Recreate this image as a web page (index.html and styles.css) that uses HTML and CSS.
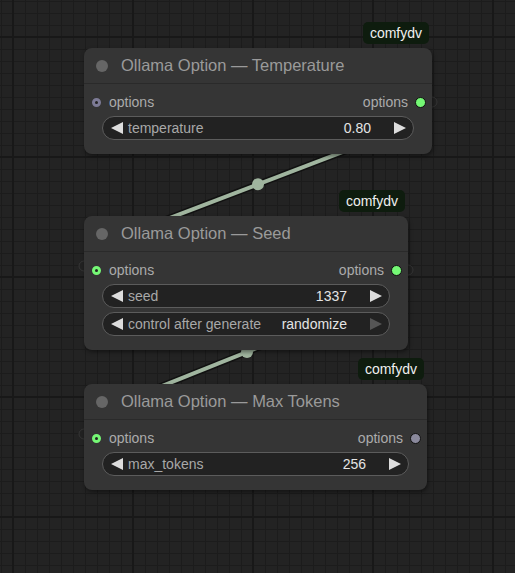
FILE: index.html
```html
<!DOCTYPE html>
<html lang="en">

<head>
    <meta charset="UTF-8">
    <meta name="viewport" content="width=device-width, initial-scale=1.0">
    <title>Ollama Options</title>

    <link rel="stylesheet" href="styles.css">
</head>

<body>
    <main class="canvas">
        <!-- links are drawn under the nodes -->
        <svg class="links" width="515" height="573" viewBox="0 0 515 573">
            <circle class="stub" cx="432" cy="102" r="5" />
            <circle class="stub" cx="84" cy="266" r="5" />
            <circle class="stub" cx="408" cy="270" r="5" />
            <circle class="stub" cx="84" cy="434" r="5" />

            <line class="wire-edge" x1="420" y1="122.4" x2="100" y2="244.7" />
            <line class="wire" x1="420" y1="122.4" x2="100" y2="244.7" />
            <circle class="wire-dot" cx="258" cy="184.3" r="6" />

            <line class="wire-edge" x1="395" y1="292.8" x2="100" y2="410.8" />
            <line class="wire" x1="395" y1="292.8" x2="100" y2="410.8" />
            <circle class="wire-dot" cx="247" cy="352" r="6" />
        </svg>

        <div class="node node-temp">
            <span class="badge">comfydv</span>
            <div class="title">
                <span class="title-dot"></span>
                <span>Ollama Option — Temperature</span>
            </div>
            <div class="body">
                <div class="slots">
                    <span class="slot-in muted"></span>
                    <span class="slot-label">options</span>
                    <span class="slot-label out">options</span>
                    <span class="slot-out"></span>
                </div>
                <div class="widget">
                    <svg class="arrow" width="12" height="12" viewBox="0 0 12 12"><polygon points="12,0 12,12 0,6" /></svg>
                    <span class="w-label">temperature</span>
                    <span class="w-value">0.80</span>
                    <svg class="arrow" width="12" height="12" viewBox="0 0 12 12"><polygon points="0,0 0,12 12,6" /></svg>
                </div>
            </div>
        </div>

        <div class="node node-seed">
            <span class="badge">comfydv</span>
            <div class="title">
                <span class="title-dot"></span>
                <span>Ollama Option — Seed</span>
            </div>
            <div class="body">
                <div class="slots">
                    <span class="slot-in"></span>
                    <span class="slot-label">options</span>
                    <span class="slot-label out">options</span>
                    <span class="slot-out"></span>
                </div>
                <div class="widget">
                    <svg class="arrow" width="12" height="12" viewBox="0 0 12 12"><polygon points="12,0 12,12 0,6" /></svg>
                    <span class="w-label">seed</span>
                    <span class="w-value">1337</span>
                    <svg class="arrow" width="12" height="12" viewBox="0 0 12 12"><polygon points="0,0 0,12 12,6" /></svg>
                </div>
                <div class="widget">
                    <svg class="arrow" width="12" height="12" viewBox="0 0 12 12"><polygon points="12,0 12,12 0,6" /></svg>
                    <span class="w-label">control after generate</span>
                    <span class="w-value">randomize</span>
                    <svg class="arrow off" width="12" height="12" viewBox="0 0 12 12"><polygon points="0,0 0,12 12,6" /></svg>
                </div>
            </div>
        </div>

        <div class="node node-tokens">
            <span class="badge">comfydv</span>
            <div class="title">
                <span class="title-dot"></span>
                <span>Ollama Option — Max Tokens</span>
            </div>
            <div class="body">
                <div class="slots">
                    <span class="slot-in"></span>
                    <span class="slot-label">options</span>
                    <span class="slot-label out">options</span>
                    <span class="slot-out muted"></span>
                </div>
                <div class="widget">
                    <svg class="arrow" width="12" height="12" viewBox="0 0 12 12"><polygon points="12,0 12,12 0,6" /></svg>
                    <span class="w-label">max_tokens</span>
                    <span class="w-value">256</span>
                    <svg class="arrow" width="12" height="12" viewBox="0 0 12 12"><polygon points="0,0 0,12 12,6" /></svg>
                </div>
            </div>
        </div>
    </main>
</body>

</html>
```

FILE: styles.css
```css
body {
    margin: 0;
    background: #232323;
    font-family: "Liberation Sans", Arial, sans-serif;
}

.canvas {
    position: relative;
    width: 515px;
    height: 573px;
    overflow: hidden;
    background-color: #232323;
    background-image:
        linear-gradient(to right, #181818 2px, transparent 2px),
        linear-gradient(to bottom, #181818 2px, transparent 2px),
        linear-gradient(to right, #1c1c1c 1px, transparent 1px),
        linear-gradient(to bottom, #1c1c1c 1px, transparent 1px);
    background-size: 120px 120px, 120px 120px, 12px 12px, 12px 12px;
    background-position: 12px 0, 0 36px, 1px 0, 0 1px;
}

.links {
    position: absolute;
    left: 0;
    top: 0;
}

.links .wire-edge {
    stroke: #111111;
    stroke-width: 7;
}

.links .wire {
    stroke: #a0b59f;
    stroke-width: 4;
}

.links .wire-dot {
    fill: #a0b59f;
}

.links .stub {
    fill: #222222;
    stroke: #363636;
    stroke-width: 1;
}

.node {
    position: absolute;
    left: 84px;
    background: #353535;
    border-radius: 8px;
    box-shadow: 1px 2px 4px rgba(0, 0, 0, 0.45);
}

.node-temp {
    top: 48px;
    width: 348px;
}

.node-seed {
    top: 216px;
    width: 324px;
}

.node-tokens {
    top: 384px;
    width: 343px;
}

.badge {
    position: absolute;
    right: 3px;
    top: -26px;
    height: 22px;
    padding: 0 7px;
    display: flex;
    align-items: center;
    background: #0e1c0e;
    color: #f0f0f0;
    font-size: 14px;
    border-radius: 5px;
}

.title {
    display: flex;
    align-items: center;
    height: 35px;
    border-bottom: 1px solid #2a2a2a;
    padding-left: 12px;
    gap: 13px;
    color: #9a9a9a;
    font-size: 16.5px;
}

.title-dot {
    width: 12px;
    height: 12px;
    border-radius: 50%;
    background: #666666;
}

.body {
    display: flex;
    flex-direction: column;
    gap: 4px;
    padding: 8px 0 14px;
}

.slots {
    display: flex;
    align-items: center;
    height: 20px;
    padding: 0 6px 0 7px;
    color: #ababab;
    font-size: 14px;
}

.slot-in {
    width: 3px;
    height: 3px;
    border-radius: 50%;
    border: 3px solid #75f875;
    background: #232323;
    margin-right: 8px;
    margin-left: 1px;
}

.slot-in.muted {
    border-color: #7d7b96;
}

.slot-label.out {
    margin-left: auto;
    margin-right: 7px;
}

.slot-out {
    width: 9px;
    height: 9px;
    border-radius: 50%;
    background: #75f875;
    border: 1px solid #111111;
}

.slot-out.muted {
    background: #8a899c;
}

.widget {
    display: flex;
    align-items: center;
    height: 22px;
    margin: 0 18px;
    padding: 0 7px 0 8px;
    background: #222222;
    border: 1px solid #5c5c5c;
    border-radius: 12px;
    font-size: 14px;
}

.arrow polygon {
    fill: #dddddd;
}

.arrow.off polygon {
    fill: #555555;
}

.w-label {
    color: #a8a8a8;
    margin-left: 5px;
}

.w-value {
    margin-left: auto;
    margin-right: 23px;
    color: #e4e4e4;
}
```
